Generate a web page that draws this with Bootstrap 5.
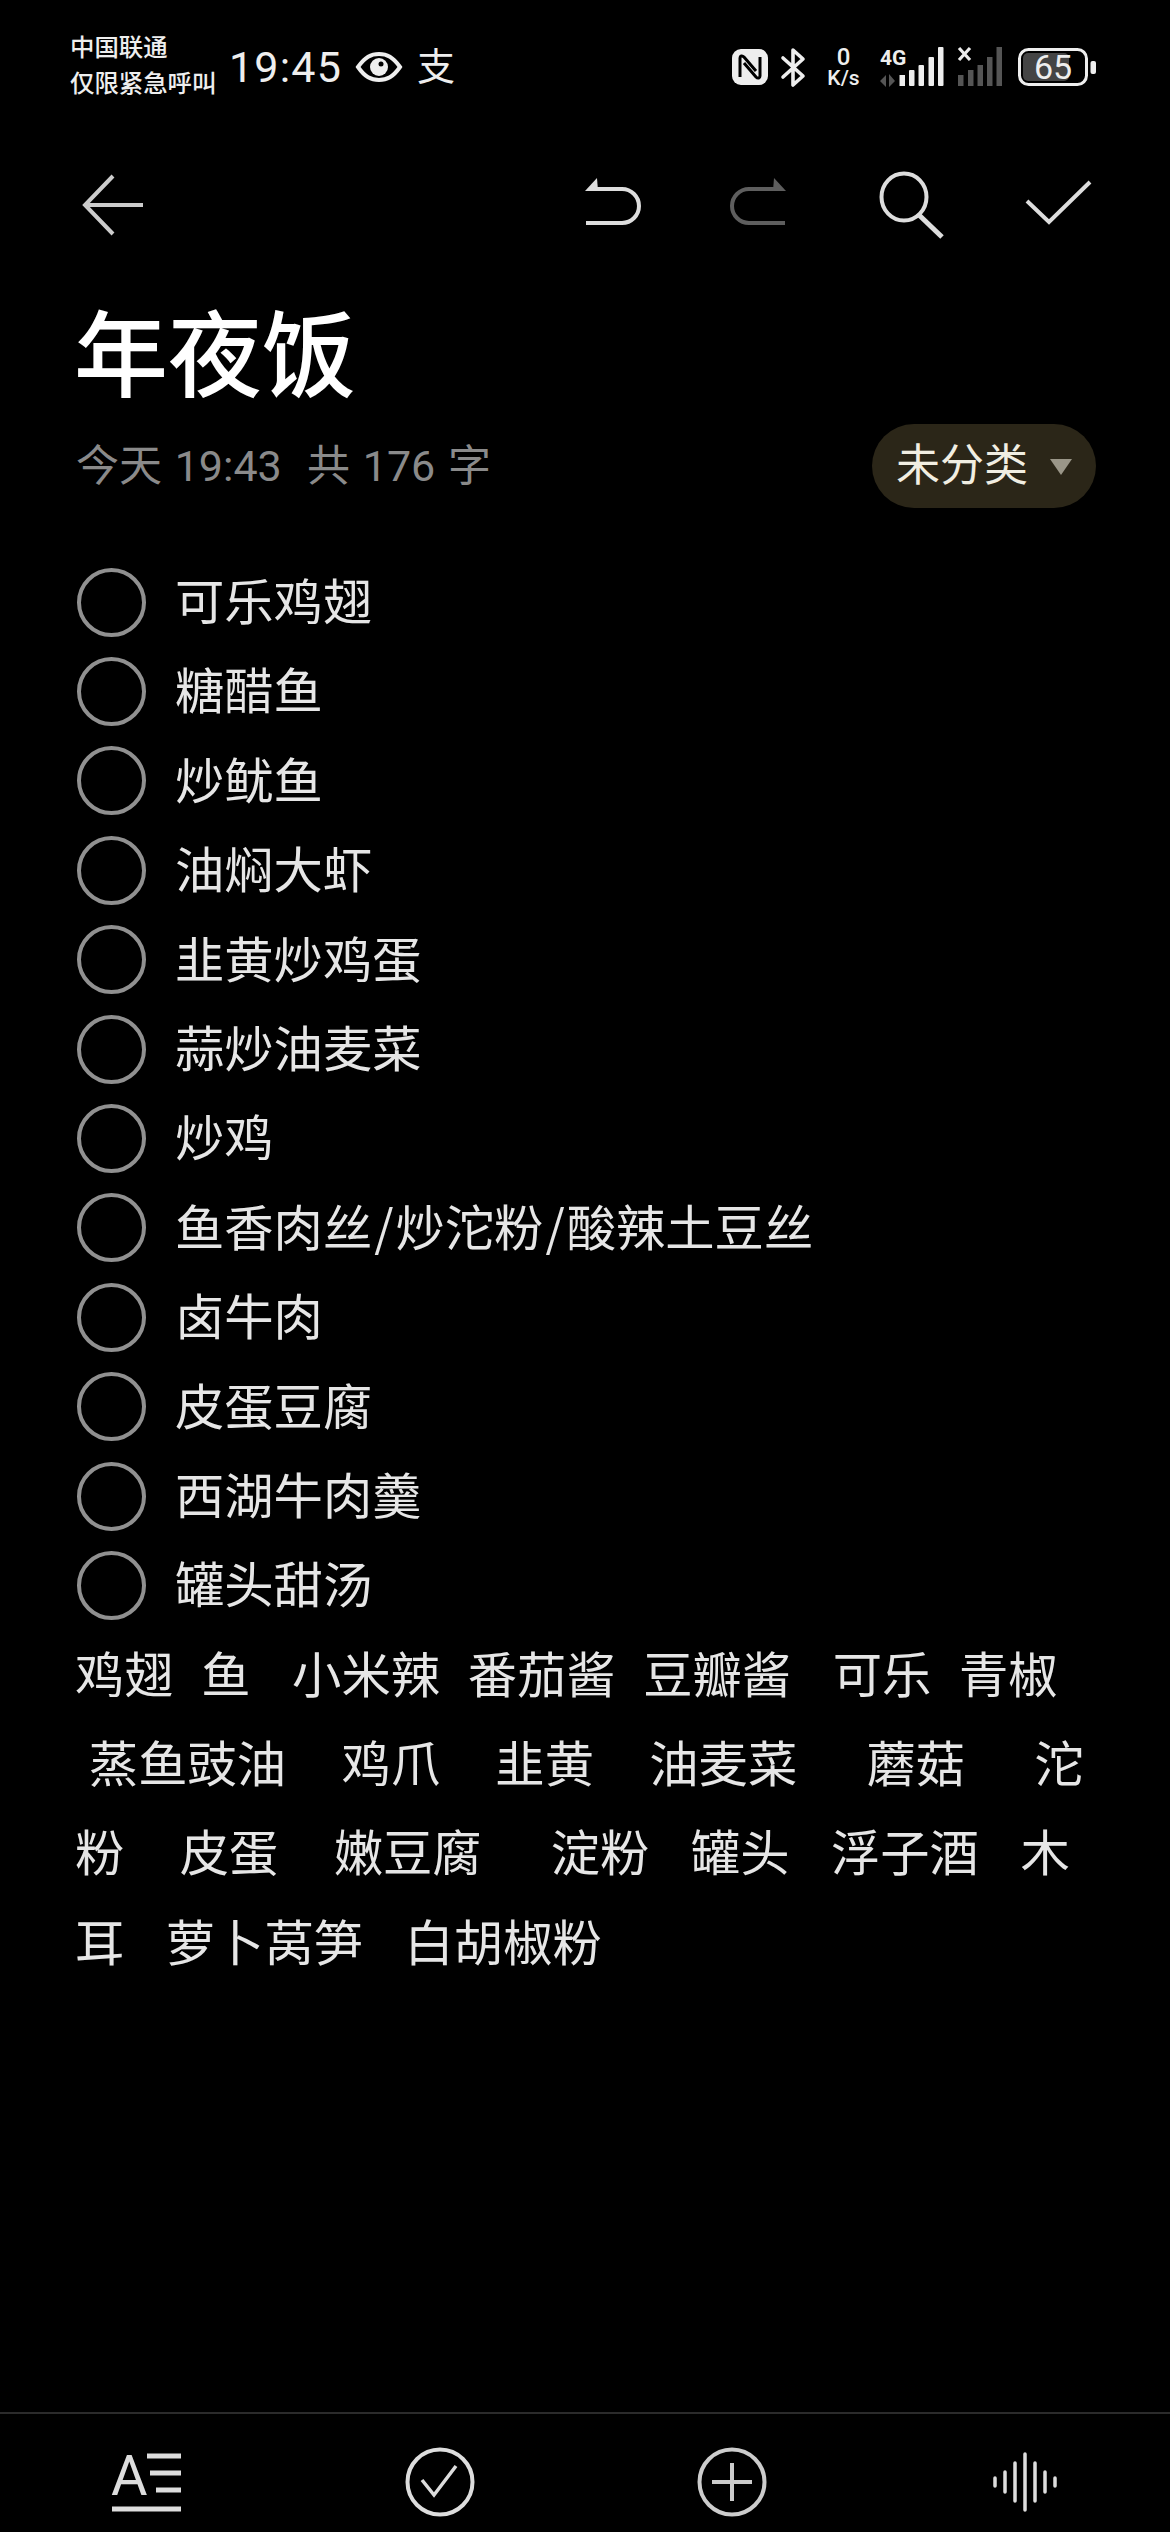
<!DOCTYPE html>
<html lang="zh-CN">
<head>
    <meta charset="UTF-8">
    <meta name="viewport" content="width=device-width, initial-scale=1.0">
    <link href="https://cdn.jsdelivr.net/npm/bootstrap@5.3.0/dist/css/bootstrap.min.css" rel="stylesheet">
    <title>年夜饭</title>
    <style>
        html, body { background: #000; }
        body { font-family: Roboto, "Noto Sans CJK SC", sans-serif; color: #e8e8e8; overflow: hidden; }
        svg { display: block; flex: none; overflow: visible; }
        .app-shell { height: 2532px; }
        .status-row { height: 130px; padding: 4px 74px 0 70px; }
        .carrier { width: 159px; font-size: 24.4px; line-height: 36px; font-weight: 500; color: #eee; margin-top: -2px; }
        .clock { width: 127px; font-size: 43px; line-height: 1; letter-spacing: 1.2px; color: #eee; }
        .pay-mark { margin-left: 15px; font-size: 38px; line-height: 1; color: #eee; }
        .st-bt { margin-left: 13px; }
        .st-speed { margin-left: 18px; width: 39px; color: #eee; text-align: center; font-weight: 500; }
        .st-speed div:first-child { font-size: 24px; line-height: 22px; }
        .st-speed div:last-child { font-size: 21px; line-height: 20px; }
        .st-sig { margin-left: 17px; }
        .st-sig2 { margin-left: 13px; }
        .st-bat { margin-left: 14px; }
        .tool-row { height: 150px; padding: 0 78px 0 82px; }
        .tool-undo { margin-left: auto; }
        .tool-redo { margin-left: 87px; }
        .tool-search { margin-left: 93px; }
        .tool-check { margin-left: 81px; }
        .page-body { padding: 0 75px 0 77px; }
        .note-title { font-size: 94px; line-height: 110px; font-weight: 500; color: #fff; margin: 23px 0 0 -3px; }
        .meta-row { margin-top: 11px; height: 84px; }
        .meta-text { font-size: 43px; margin-left: -1px; color: #8a8a8a; white-space: pre; word-spacing: 2px; }
        .cat-pill { width: 224px; height: 84px; margin-right: -1px; background: #2b2618; border-radius: 42px; padding-left: 24px; font-size: 44px; color: #f1eee2; gap: 21px; }
        .todo-list { margin-top: 46px; }
        .todo-row, .plain-line { height: 89.4px; font-size: 49.3px; line-height: 89.4px; font-family: "Noto Sans CJK SC", sans-serif; color: #e6e6e6; white-space: pre; word-spacing: 2.8px; }
        .plain-line { margin-left: -2px; }
        .todo-row { gap: 29px; }
        .ring { width: 69px; height: 69px; flex: none; border: 4px solid #909090; border-radius: 50%; margin-top: 7px; }
        .slash-gap { margin: 0 2px; }
        .bottom-bar { height: 120px; border-top: 2px solid #2b2b2b; padding-top: 33px; }
        .bottom-slot { width: 291px; }
        .bottom-font { margin-right: 4px; }
        .bottom-plus { margin-left: 3px; }
        .bottom-wave { margin: 5px 0 0 6px; }
    </style>
</head>
<body>
    <div class="app-shell d-flex flex-column">
        <div class="status-row d-flex align-items-center">
            <div class="carrier"><div>中国联通</div><div>仅限紧急呼叫</div></div>
            <div class="clock">19:45</div>
            <svg width="46" height="30" viewBox="0 0 46 30"><path d="M2 15C9 5 15 2 23 2s14 3 21 13c-7 10-13 13-21 13S9 25 2 15z" fill="none" stroke="#eee" stroke-width="4"/><circle cx="23" cy="15" r="9" fill="#eee"/><circle cx="25" cy="12" r="2.5" fill="#000"/></svg>
            <div class="pay-mark">支</div>
            <div class="ms-auto"></div>
            <svg width="36" height="36" viewBox="0 0 36 36"><rect width="36" height="36" rx="9" fill="#eee"/><path d="M8 28V9c0-2 2-3 4-1l12 14M28 8v19c0 2-2 3-4 1L12 14" fill="none" stroke="#000" stroke-width="3"/></svg>
            <svg class="st-bt" width="25" height="39" viewBox="0 0 25 39"><path d="M2 10l20 18-10 9V2l10 9L2 29" fill="none" stroke="#eee" stroke-width="3.6" stroke-linejoin="round" stroke-linecap="round"/></svg>
            <div class="st-speed"><div>0</div><div>K/s</div></div>
            <svg class="st-sig" width="65" height="40" viewBox="0 0 65 40">
                <text x="0" y="18" font-family="Roboto" font-weight="700" font-size="21" fill="#eee">4G</text>
                <path d="M0 34l6-6v12zM9 27l6 7-6 6z" fill="#555"/>
                <rect x="19.500" y="28" width="5.500" height="11" fill="#eee"/>
                <rect x="29" y="23" width="5.500" height="16" rx="1" fill="#eee"/>
                <rect x="38.500" y="18" width="5.500" height="21" rx="1" fill="#eee"/>
                <rect x="48.500" y="10" width="5.500" height="29" rx="1" fill="#eee"/>
                <rect x="58" y="0" width="5.500" height="39" rx="1" fill="#eee"/>
            </svg>
            <svg class="st-sig2" width="46" height="40" viewBox="0 0 46 40">
                <path d="M1 1l11 12M12 1L1 13" stroke="#eee" stroke-width="3.200" fill="none"/>
                <rect x="0" y="28" width="5.500" height="11" fill="#555"/>
                <rect x="10" y="23" width="5.500" height="16" fill="#555"/>
                <rect x="19.500" y="18" width="5.500" height="21" fill="#555"/>
                <rect x="29" y="10" width="5.500" height="29" fill="#555"/>
                <rect x="38.500" y="0" width="5.500" height="39" fill="#555"/>
            </svg>
            <svg class="st-bat" width="78" height="38" viewBox="0 0 78 38">
                <rect x="1.500" y="1.500" width="67" height="35" rx="9" fill="#000" stroke="#eee" stroke-width="3"/>
                <rect x="5" y="5" width="46" height="28" rx="5" fill="#444"/>
                <rect x="72.500" y="13" width="5.500" height="13" rx="2" fill="#eee"/>
                <text x="35" y="31" text-anchor="middle" font-family="Roboto" font-size="34" fill="#eee">65</text>
            </svg>
        </div>
        <div class="tool-row d-flex align-items-center">
            <svg width="62" height="62" viewBox="0 0 62 62"><path d="M31 2L3 31l28 29M3 31h58" fill="none" stroke="#ccc" stroke-width="4"/></svg>
            <svg class="tool-undo" width="57" height="54" viewBox="0 0 57 54"><path d="M12 11h25a17 17 0 0 1 0 34H1" fill="none" stroke="#ddd" stroke-width="4"/><path d="M0 13L12 0l1 13z" fill="#ddd"/></svg>
            <svg class="tool-redo" width="57" height="54" viewBox="0 0 57 54"><path d="M45 11H20a17 17 0 0 0 0 34h36" fill="none" stroke="#5e5e5e" stroke-width="4"/><path d="M57 13L45 0l-1 13z" fill="#5e5e5e"/></svg>
            <svg class="tool-search" width="66" height="68" viewBox="0 0 66 68"><ellipse cx="25" cy="26" rx="22.500" ry="23.500" fill="none" stroke="#ddd" stroke-width="4"/><path d="M40 44l23 22" stroke="#ddd" stroke-width="5"/></svg>
            <svg class="tool-check" width="66" height="51" viewBox="0 0 66 51"><path d="M1 21l22 21L64 2" fill="none" stroke="#ddd" stroke-width="4"/></svg>
        </div>
        <div class="page-body flex-grow-1">
            <h1 class="note-title">年夜饭</h1>
            <div class="meta-row d-flex justify-content-between align-items-center">
                <div class="meta-text">今天 19:43  共 176 字</div>
                <div class="cat-pill d-flex align-items-center">
                    <span>未分类</span>
                    <svg width="24" height="17" viewBox="0 0 24 17"><path d="M1 1h22L12 17z" fill="#9a9688"/></svg>
                </div>
            </div>
            <div class="todo-list">
                <div class="todo-row d-flex align-items-center"><span class="ring"></span><span>可乐鸡翅</span></div>
                <div class="todo-row d-flex align-items-center"><span class="ring"></span><span>糖醋鱼</span></div>
                <div class="todo-row d-flex align-items-center"><span class="ring"></span><span>炒鱿鱼</span></div>
                <div class="todo-row d-flex align-items-center"><span class="ring"></span><span>油焖大虾</span></div>
                <div class="todo-row d-flex align-items-center"><span class="ring"></span><span>韭黄炒鸡蛋</span></div>
                <div class="todo-row d-flex align-items-center"><span class="ring"></span><span>蒜炒油麦菜</span></div>
                <div class="todo-row d-flex align-items-center"><span class="ring"></span><span>炒鸡</span></div>
                <div class="todo-row d-flex align-items-center"><span class="ring"></span><span>鱼香肉丝<span class="slash-gap">/</span>炒沱粉<span class="slash-gap">/</span>酸辣土豆丝</span></div>
                <div class="todo-row d-flex align-items-center"><span class="ring"></span><span>卤牛肉</span></div>
                <div class="todo-row d-flex align-items-center"><span class="ring"></span><span>皮蛋豆腐</span></div>
                <div class="todo-row d-flex align-items-center"><span class="ring"></span><span>西湖牛肉羹</span></div>
                <div class="todo-row d-flex align-items-center"><span class="ring"></span><span>罐头甜汤</span></div>
                <div class="plain-line">鸡翅  鱼   小米辣  番茄酱  豆瓣酱   可乐  青椒</div>
                <div class="plain-line"> 蒸鱼豉油    鸡爪    韭黄    油麦菜     蘑菇     沱</div>
                <div class="plain-line">粉    皮蛋    嫩豆腐     淀粉   罐头   浮子酒   木</div>
                <div class="plain-line">耳   萝卜莴笋   白胡椒粉</div>
            </div>
        </div>
        <div class="bottom-bar d-flex justify-content-center">
            <div class="bottom-slot d-flex justify-content-center">
                <svg class="bottom-font" width="70" height="70" viewBox="0 0 70 70"><text x="-1" y="48" font-family="Roboto" font-size="56" fill="#ddd">A</text><path d="M35 9h34M38 26h31M44 43h25" stroke="#ddd" stroke-width="5"/><path d="M0 62h69" stroke="#ddd" stroke-width="5"/></svg>
            </div>
            <div class="bottom-slot d-flex justify-content-center">
                <svg width="70" height="70" viewBox="0 0 70 70"><circle cx="35" cy="35" r="32.500" fill="none" stroke="#ddd" stroke-width="4"/><path d="M17 33l12 15 22-29" fill="none" stroke="#ddd" stroke-width="3.500"/></svg>
            </div>
            <div class="bottom-slot d-flex justify-content-center">
                <svg class="bottom-plus" width="70" height="70" viewBox="0 0 70 70"><circle cx="35" cy="35" r="32.500" fill="none" stroke="#ccc" stroke-width="4"/><path d="M35 16v38M15 35h40" stroke="#ccc" stroke-width="4"/></svg>
            </div>
            <div class="bottom-slot d-flex justify-content-center">
                <svg class="bottom-wave" width="66" height="60" viewBox="0 0 66 60"><g stroke="#ddd" stroke-width="3.500" stroke-linecap="round"><path d="M3 26v8M13 20v20M23 11v38M33 2v56M43 11v38M53 20v20M63 26v8"/></g></svg>
            </div>
        </div>
    </div>
</body>
</html>
